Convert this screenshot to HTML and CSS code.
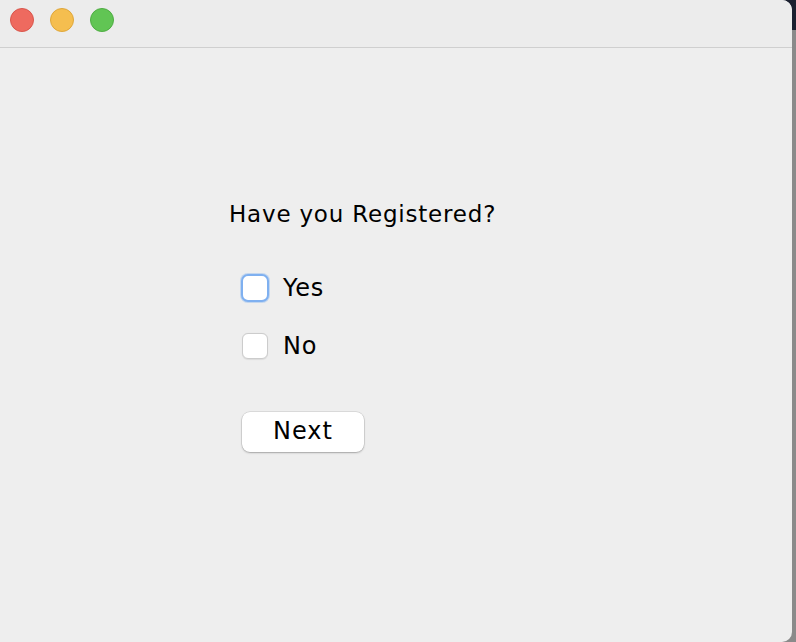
FILE: index.html
```html
<!DOCTYPE html>
<html>
<head>
<meta charset="utf-8">
<link rel="stylesheet" href="styles.css">
</head>
<body>
<div class="window">
  <div class="titlebar">
    <span class="light red"></span>
    <span class="light yellow"></span>
    <span class="light green"></span>
  </div>
  <div class="content">
    <div class="form">
      <div class="question">Have you Registered?</div>
      <label class="option">
        <span class="box focused"></span>
        <span class="label">Yes</span>
      </label>
      <label class="option">
        <span class="box"></span>
        <span class="label">No</span>
      </label>
      <button class="next">Next</button>
    </div>
  </div>
</div>
</body>
</html>
```
FILE: styles.css
```css
html, body {
  margin: 0;
  padding: 0;
  height: 100%;
}
body {
  background: linear-gradient(to bottom, #1b2030 0, #1b2030 30px, #8a8a8a 30px, #8a8a8a 100%);
  font-family: "DejaVu Sans", "Liberation Sans", sans-serif;
  color: #000;
  overflow: hidden;
}
.window {
  width: 792px;
  height: 642px;
  background: #eeeeee;
  border-radius: 0 10px 10px 0;
  display: flex;
  flex-direction: column;
  overflow: hidden;
}
.titlebar {
  background: #ececec;
  border-bottom: 1px solid #cfcfcf;
  display: flex;
  align-items: center;
  gap: 16px;
  padding-left: 10px;
  padding-bottom: 7px;
  box-sizing: border-box;
  height: 48px;
}
.light {
  width: 24px;
  height: 24px;
  border-radius: 50%;
  box-sizing: border-box;
}
.red { background: #ee6a5f; border: 1px solid #d9564c; }
.yellow { background: #f5be4f; border: 1px solid #dfa73a; }
.green { background: #61c554; border: 1px solid #4fad43; }
.content {
  flex: 1;
  display: flex;
  padding-left: 229px;
  padding-top: 152px;
}
.form {
  display: flex;
  flex-direction: column;
  align-items: flex-start;
}
.question {
  font-size: 23px;
  letter-spacing: 0.8px;
  line-height: 28px;
}
.option {
  display: flex;
  align-items: center;
  gap: 15px;
  margin-left: 13px;
  font-size: 24px;
  letter-spacing: 0.8px;
}
.option:first-of-type {
  margin-top: 46px;
}
.option + .option {
  margin-top: 30px;
}
.box {
  width: 26px;
  height: 26px;
  border-radius: 6px;
  background: #fff;
  border: 1px solid #cccccc;
  box-sizing: border-box;
  box-shadow: 0 0.5px 1px rgba(0,0,0,0.08);
}
.box.focused {
  border: 2px solid #7fb0f0;
  box-shadow: 0 0 0 1px rgba(140, 185, 240, 0.45);
  width: 28px;
  height: 28px;
  margin-left: -1px;
  margin-right: -1px;
  border-radius: 7px;
}
.label {
  line-height: 28px;
}
.next {
  margin-top: 52px;
  margin-left: 13px;
  width: 122px;
  height: 40px;
  border: none;
  border-radius: 8px;
  background: #ffffff;
  box-shadow: 0 0 0 0.5px rgba(0,0,0,0.15), 0 1px 2px rgba(0,0,0,0.25);
  font-family: "DejaVu Sans", "Liberation Sans", sans-serif;
  font-size: 24px;
  letter-spacing: 1px;
  color: #000;
  padding: 0 0 2px 0;
}
```
